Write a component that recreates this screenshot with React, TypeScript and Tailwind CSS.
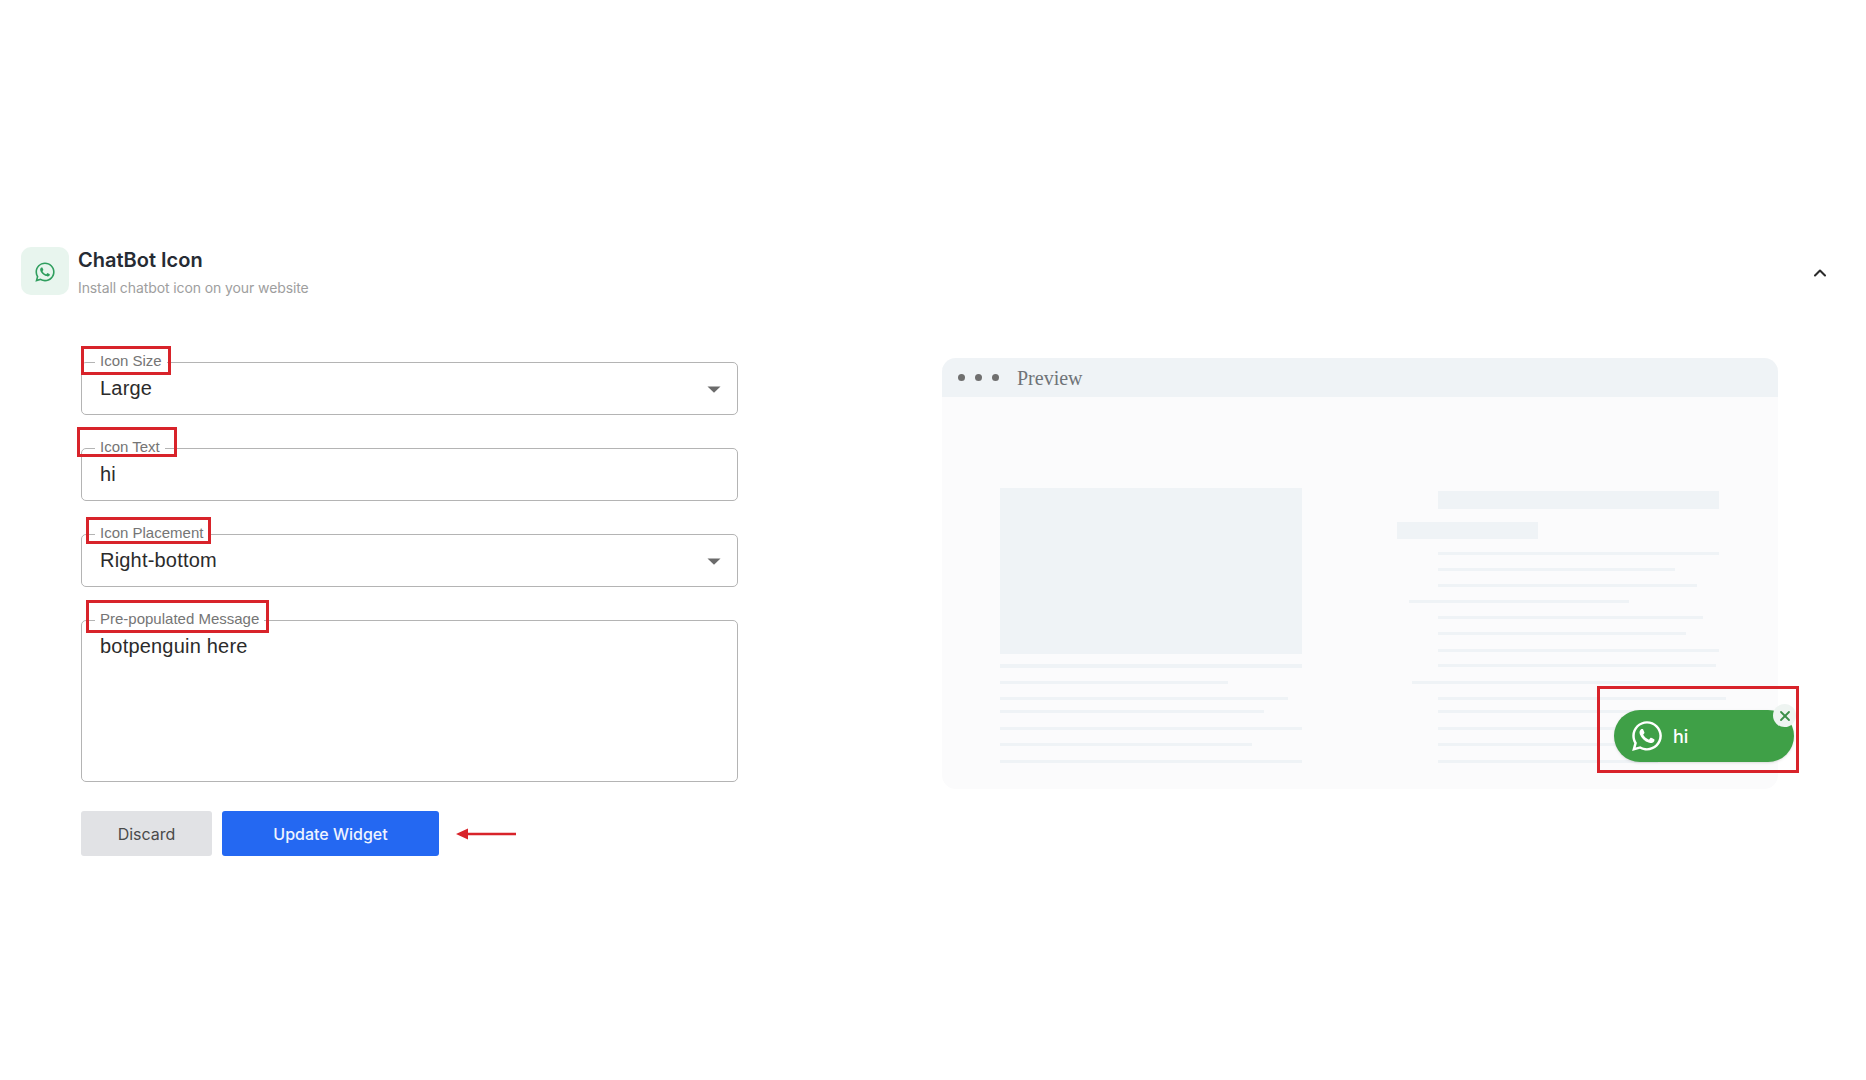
import { ChevronUp, X } from "lucide-react";
import { FaWhatsapp } from "react-icons/fa";

const leftLines = [
  { mt: 10, w: 302, h: 4 },
  { mt: 13, w: 228, h: 3 },
  { mt: 13, w: 288, h: 3 },
  { mt: 10, w: 264, h: 3 },
  { mt: 14, w: 302, h: 3 },
  { mt: 13, w: 252, h: 3 },
  { mt: 14, w: 302, h: 3 },
];

const rightLines = [
  { mt: 13, ml: 41, w: 281 },
  { mt: 13, ml: 41, w: 237 },
  { mt: 13, ml: 41, w: 259 },
  { mt: 13, ml: 12, w: 220 },
  { mt: 13, ml: 41, w: 265 },
  { mt: 13, ml: 41, w: 248 },
  { mt: 14, ml: 41, w: 281 },
  { mt: 12, ml: 41, w: 278 },
  { mt: 14, ml: 15, w: 228 },
  { mt: 13, ml: 41, w: 288 },
  { mt: 10, ml: 41, w: 220 },
  { mt: 14, ml: 41, w: 220 },
  { mt: 13, ml: 41, w: 220 },
  { mt: 14, ml: 41, w: 220 },
];

function Field({
  label,
  children,
  contentClass,
}: {
  label: string;
  children: React.ReactNode;
  contentClass: string;
}) {
  return (
    <fieldset className="rounded-[5px] border border-[#b4b4b4] pl-[18px] pr-[13px]">
      <legend className="relative -top-[2px] -ml-[5px] px-[5px] text-[15px] leading-[17px] text-[#757575] font-['Liberation_Sans',Arial,sans-serif]">
        {label}
      </legend>
      <div className={contentClass}>{children}</div>
    </fieldset>
  );
}

function Caret() {
  return (
    <svg width="14" height="7" viewBox="0 0 14 7" className="shrink-0">
      <path d="M0.5 0.5 H13.5 L7 6.8 Z" fill="#6b6b6b" />
    </svg>
  );
}

const valueClass =
  "text-[20px] tracking-[0.2px] leading-[24px] text-[#2b2b2b] font-['Liberation_Sans',Arial,sans-serif]";

export default function App() {
  return (
    <div className="relative min-h-screen w-full overflow-hidden bg-white pt-[247px] font-['Inter',sans-serif]">
      {/* header */}
      <div className="flex items-start pl-[21px] pr-[36px]">
        <div className="flex h-[48px] w-[48px] items-center justify-center rounded-[10px] bg-[#e8f5ee]">
          <FaWhatsapp className="mt-[1px] h-[22px] w-[22px] text-[#2f9e5e]" />
        </div>
        <div className="ml-[9px] flex flex-col">
          <h2 className="mt-[1px] text-[20px] leading-[24px] font-semibold text-[#262b33]">ChatBot Icon</h2>
          <p className="mt-[7px] text-[14px] leading-[18px] tracking-[-0.1px] text-[#9e9e9e]">Install chatbot icon on your website</p>
        </div>
        <ChevronUp className="ml-auto mt-[16px] h-[20px] w-[20px] text-[#2b2b2b]" strokeWidth={2.5} />
      </div>

      {/* body */}
      <div className="mt-[57px] flex items-start pl-[81px]">
        {/* form */}
        <div className="flex w-[657px] flex-col">
          <Field label="Icon Size" contentClass="flex h-[43px] items-start justify-between pr-[3px] pt-[5px]">
            <span className={valueClass}>Large</span>
            <span className="flex h-[26px] items-center"><Caret /></span>
          </Field>
          <div className="h-[25px]" />
          <Field label="Icon Text" contentClass="flex h-[43px] items-start pt-[5px]">
            <span className={valueClass}>hi</span>
          </Field>
          <div className="h-[25px]" />
          <Field label="Icon Placement" contentClass="flex h-[43px] items-start justify-between pr-[3px] pt-[5px]">
            <span className={valueClass}>Right-bottom</span>
            <span className="flex h-[26px] items-center"><Caret /></span>
          </Field>
          <div className="h-[25px]" />
          <Field label="Pre-populated Message" contentClass="h-[152px] pt-[5px]">
            <span className={valueClass}>botpenguin here</span>
          </Field>

          <div className="mt-[29px] flex items-center gap-[10px]">
            <button className="h-[45px] w-[131px] rounded-[3px] bg-[#e1e2e5] text-[16px] text-[#4a4a4a]">Discard</button>
            <button className="h-[45px] w-[217px] rounded-[3px] bg-[#2468f2] text-[16px] font-medium text-[#eef3ff]">
              Update Widget
            </button>
            <svg width="60" height="14" viewBox="0 0 60 14" className="ml-[7px]">
              <path d="M0 7 L12 1.5 V5.8 H60 V8.2 H12 V12.5 Z" fill="#d8232a" />
            </svg>
          </div>
        </div>

        {/* preview */}
        <div className="relative ml-[204px] mt-[4px] h-[431px] w-[836px] rounded-[14px] bg-[#fbfbfc]">
          <div className="flex h-[39px] items-center rounded-t-[14px] bg-[#eff3f6] pl-[16px]">
            <span className="h-[7px] w-[7px] rounded-full bg-[#6f6f6f]" />
            <span className="ml-[10px] h-[7px] w-[7px] rounded-full bg-[#6f6f6f]" />
            <span className="ml-[10px] h-[7px] w-[7px] rounded-full bg-[#6f6f6f]" />
            <span className="ml-[18px] text-[20px] text-[#6f7378] font-['Liberation_Serif',serif]">Preview</span>
          </div>

          <div className="flex items-start pl-[58px] pt-[91px]">
            <div className="flex w-[302px] flex-col">
              <div className="h-[166px] bg-[#eff3f6]" />
              {leftLines.map((l, i) => (
                <div key={i} className="bg-[#eff3f6]" style={{ marginTop: l.mt, width: l.w, height: l.h }} />
              ))}
            </div>
            <div className="ml-[95px] flex flex-col pt-[3px]">
              <div className="ml-[41px] h-[18px] w-[281px] bg-[#eff3f6]" />
              <div className="mt-[13px] h-[17px] w-[141px] bg-[#eff3f6]" />
              {rightLines.map((l, i) => (
                <div key={i} className="h-[3px] bg-[#eff3f6]" style={{ marginTop: l.mt, marginLeft: l.ml, width: l.w }} />
              ))}
            </div>
          </div>

          {/* annotated chat widget */}
          <div className="absolute left-[655px] top-[328px] h-[87px] w-[202px] border-[3px] border-[#d8232a]" />
          <div className="absolute left-[672px] top-[352px] flex h-[52px] w-[180px] items-center rounded-full bg-[#3fa047] pl-[16px] shadow-sm">
            <FaWhatsapp className="h-[34px] w-[34px] text-white" />
            <span className="ml-[9px] text-[18px] font-medium text-white">hi</span>
            <span className="absolute left-[159px] top-[-6px] flex h-[23px] w-[23px] items-center justify-center rounded-full bg-[#eef4f1]">
              <X className="h-[16px] w-[16px] text-[#3c8f4a]" strokeWidth={2.75} />
            </span>
          </div>
        </div>
      </div>

      {/* annotation boxes */}
      <div className="absolute left-[81px] top-[346px] h-[29px] w-[90px] border-[3px] border-[#d8232a]" />
      <div className="absolute left-[77px] top-[427px] h-[30px] w-[100px] border-[3px] border-[#d8232a]" />
      <div className="absolute left-[86px] top-[517px] h-[27px] w-[125px] border-[3px] border-[#d8232a]" />
      <div className="absolute left-[86px] top-[600px] h-[33px] w-[183px] border-[3px] border-[#d8232a]" />
    </div>
  );
}
